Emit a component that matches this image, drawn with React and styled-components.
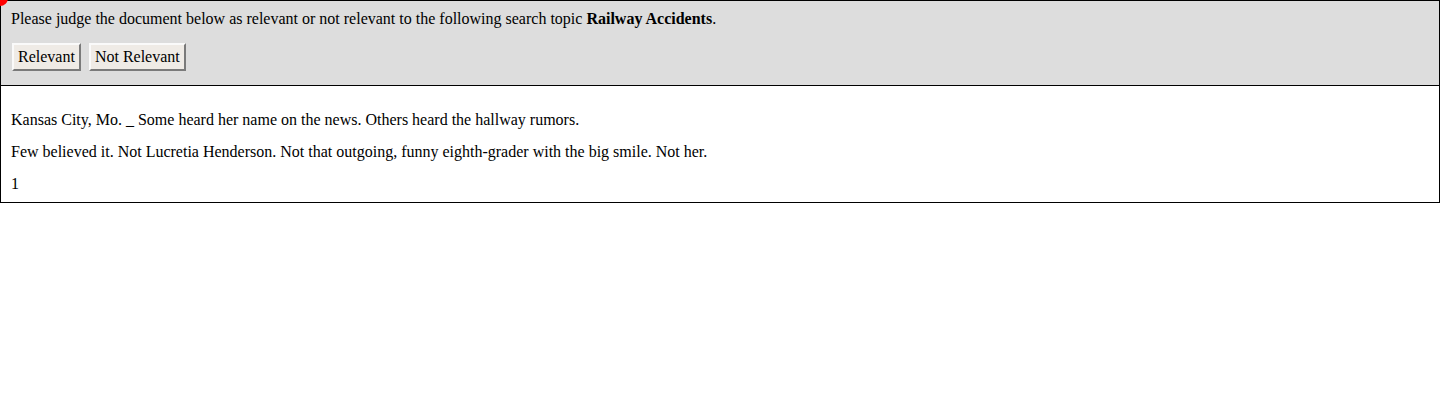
import React from 'react';
import styled, { createGlobalStyle } from 'styled-components';

const GlobalStyle = createGlobalStyle`
  body {
    margin: 0;
    background: #fff;
    font-family: "Liberation Serif", "Times New Roman", serif;
    font-size: 16px;
    color: #000;
  }
`;

const Frame = styled.div`
  position: relative;
  border: 1px solid #000;
`;

// small red marker sitting on the top-left corner
const Marker = styled.span`
  position: absolute;
  left: -9px;
  top: -11px;
  width: 16px;
  height: 16px;
  border-radius: 50%;
  background: #f00;
`;

const Header = styled.div`
  background: #ddd;
  border-bottom: 1px solid #000;
  padding: 9px 10px 14px;
  display: flex;
  flex-direction: column;
  gap: 15px;
`;

const Line = styled.p`
  margin: 0;
  line-height: 18px;
`;

const Buttons = styled.div`
  display: flex;
  gap: 8px;
  padding-left: 1px;
`;

const JudgeButton = styled.button`
  font-family: "Liberation Serif", "Times New Roman", serif;
  font-size: 16px;
  line-height: 18px;
  color: #000;
  background: #efebe6;
  padding: 3px 4px;
  border: 2px solid;
  border-color: #fafafa #7a7a7a #7a7a7a #fafafa;
  border-radius: 0;
  cursor: pointer;
`;

const Document = styled.div`
  padding: 25px 10px 9px;
  display: flex;
  flex-direction: column;
  gap: 14px;
`;

export default function App() {
  return (
    <>
      <GlobalStyle />
      <Frame>
        <Marker />
        <Header>
          <Line>
            Please judge the document below as relevant or not relevant to the following search topic{' '}
            <b>Railway Accidents</b>.
          </Line>
          <Buttons>
            <JudgeButton>Relevant</JudgeButton>
            <JudgeButton>Not Relevant</JudgeButton>
          </Buttons>
        </Header>
        <Document>
          <Line>Kansas City, Mo. _ Some heard her name on the news. Others heard the hallway rumors.</Line>
          <Line>
            Few believed it. Not Lucretia Henderson. Not that outgoing, funny eighth-grader with the big smile. Not her.
          </Line>
          <Line>1</Line>
        </Document>
      </Frame>
    </>
  );
}
